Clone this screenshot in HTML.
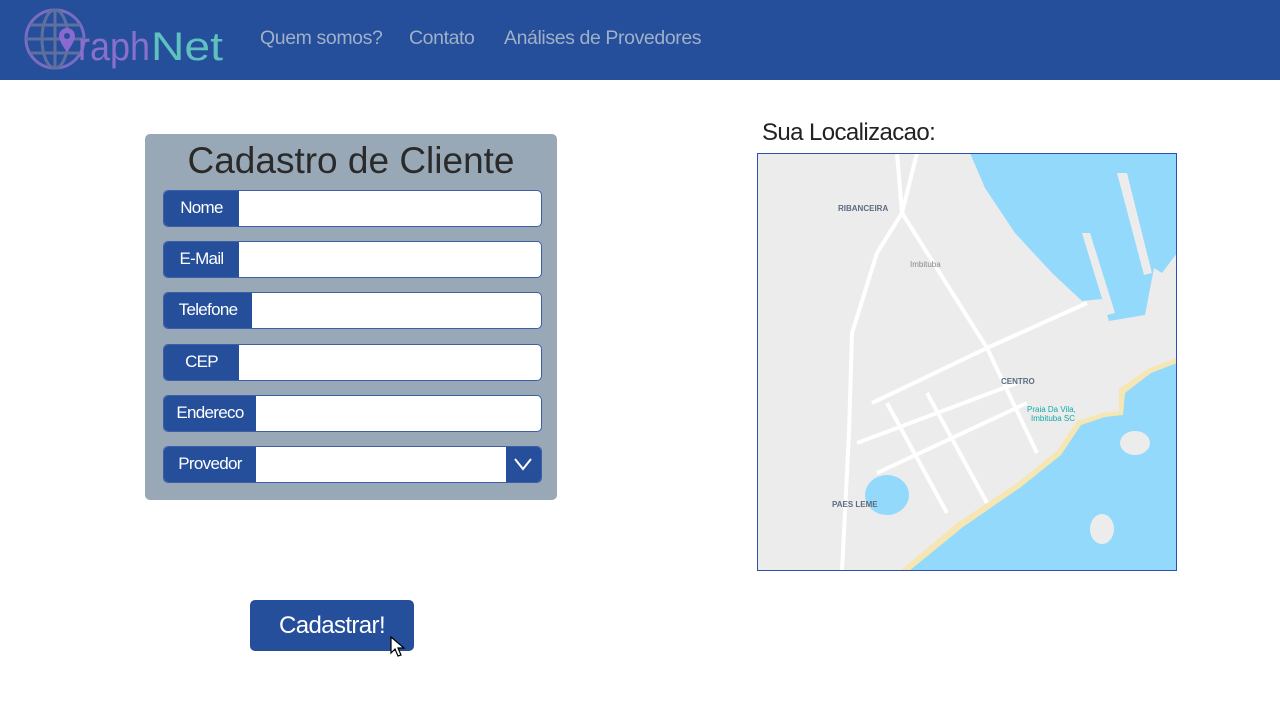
<!DOCTYPE html>
<html><head><meta charset="utf-8"><style>
*{margin:0;padding:0;box-sizing:border-box}
body{width:1280px;height:720px;background:#fff;font-family:"Liberation Sans",sans-serif;position:relative;overflow:hidden}
.nav{position:absolute;left:0;top:0;width:1280px;height:80px;background:#254e9b}
.nav a{position:absolute;top:27px;color:#9fb0c8;font-size:19.5px;letter-spacing:-0.4px}
.panel{position:absolute;left:145px;top:134px;width:412px;height:366px;background:#98a8b6;border-radius:5px}
.title{position:absolute;left:0;width:412px;top:6px;text-align:center;font-size:37px;color:#2a2a2a;letter-spacing:0px}
.row{position:absolute;left:18px;width:379px;height:37px;background:#fff;border:1.5px solid #3d5fa8;border-radius:5px;overflow:hidden}
.lab{position:absolute;left:0;top:0;height:100%;background:#254e9b;color:#fff;font-size:17px;line-height:34px;text-align:center;letter-spacing:-0.7px}
.btn{position:absolute;left:250px;top:600px;width:164px;height:51px;background:#254e9b;border-radius:5px;color:#fff;font-size:24px;text-align:center;line-height:51px;letter-spacing:-0.6px}
</style></head><body>
<div class="nav">
<svg width="230" height="80" style="position:absolute;left:0;top:0">
<g fill="none" stroke="#5f6fa0" stroke-width="3">
<circle cx="55" cy="39" r="29" stroke="#7a6cc0"/>
<ellipse cx="55" cy="39" rx="13" ry="29"/>
<line x1="26" y1="39" x2="84" y2="39"/><line x1="55" y1="10" x2="55" y2="68"/>
<line x1="30" y1="25" x2="80" y2="25"/><line x1="30" y1="53" x2="80" y2="53"/>
</g>
<path d="M67 28a8 8 0 0 1 8 8c0 6-8 16-8 16s-8-10-8-16a8 8 0 0 1 8-8z" fill="#8a6ad0"/>
<circle cx="67" cy="36" r="3" fill="#2a4a9a"/>
<text x="78" y="60" font-family="Liberation Sans" font-size="40" fill="#8870cc" textLength="72" lengthAdjust="spacingAndGlyphs">raph</text>
<text x="151" y="60" font-family="Liberation Sans" font-size="40" fill="#5fc0c0" textLength="72" lengthAdjust="spacingAndGlyphs">Net</text>
</svg>
<a style="left:260px">Quem somos?</a>
<a style="left:409px">Contato</a>
<a style="left:504px">Análises de Provedores</a>
</div>
<div class="panel">
<div class="title">Cadastro de Cliente</div>
<div class="row" style="top:56px"><div class="lab" style="width:75px">Nome</div></div>
<div class="row" style="top:107px"><div class="lab" style="width:75px">E-Mail</div></div>
<div class="row" style="top:158px"><div class="lab" style="width:88px">Telefone</div></div>
<div class="row" style="top:210px"><div class="lab" style="width:75px">CEP</div></div>
<div class="row" style="top:261px"><div class="lab" style="width:92px">Endereco</div></div>
<div class="row" style="top:312px"><div class="lab" style="width:92px">Provedor</div>
<div style="position:absolute;right:0;top:0;width:35px;height:100%;background:#254e9b"><svg width="35" height="35"><path d="M9 12l8 10l8-10" fill="none" stroke="#fff" stroke-width="2"/></svg></div></div>
</div>
<div class="btn">Cadastrar!</div>
<svg style="position:absolute;left:390px;top:636px" width="16" height="22"><path d="M1 1v16l4-4 3 7 3-1-3-7h6z" fill="#fff" stroke="#000" stroke-width="1.2"/></svg>
<div style="position:absolute;left:762px;top:119px;font-size:24px;color:#222;letter-spacing:-0.6px">Sua Localizacao:</div>
<svg style="position:absolute;left:757px;top:153px" width="420" height="418">
<rect width="420" height="418" fill="#ececec"/>
<path d="M213 0L420 0 420 100 405 120 397 115 388 162 352 168 345 146 325 148 295 120 258 80 228 35z" fill="#93d9fb"/>
<path d="M420 205L420 418 143 418 200 370 260 330 300 298 320 268 345 260 362 258 362 236 392 215z" fill="#f5e6b4"/>
<path d="M420 210L420 418 152 418 206 374 264 334 304 302 324 272 348 264 366 262 368 240 394 220z" fill="#93d9fb"/>
<ellipse cx="130" cy="342" rx="22" ry="20" fill="#93d9fb"/>
<ellipse cx="378" cy="290" rx="15" ry="12" fill="#ececec"/>
<ellipse cx="345" cy="376" rx="12" ry="15" fill="#ececec"/>
<path d="M360 20l10 0 25 100-8 2z M325 80l8 0 25 80-8 2z" fill="#ececec"/>
<g stroke="#fff" stroke-width="4" fill="none">
<path d="M140 0L145 60 120 100 95 180 92 280 85 418"/>
<path d="M160 0L145 60 230 195 280 300"/>
<path d="M115 250L230 195 330 150"/>
<path d="M100 290L260 230"/><path d="M120 320L270 250"/><path d="M130 250l60 110"/><path d="M170 240l60 110"/>
</g>
<g font-family="Liberation Sans" font-size="8" font-weight="bold" fill="#5d6c80">
<text x="81" y="58">RIBANCEIRA</text><text x="244" y="231">CENTRO</text><text x="75" y="354">PAES LEME</text></g>
<text x="153" y="114" font-family="Liberation Sans" font-size="8" fill="#888">Imbituba</text>
<text x="270" y="259" font-family="Liberation Sans" font-size="8" fill="#1aa">Praia Da Vila,</text>
<text x="274" y="268" font-family="Liberation Sans" font-size="8" fill="#1aa">Imbituba SC</text>
<rect x="0.5" y="0.5" width="419" height="417" fill="none" stroke="#2e4fb0"/>
</svg>
</body></html>
